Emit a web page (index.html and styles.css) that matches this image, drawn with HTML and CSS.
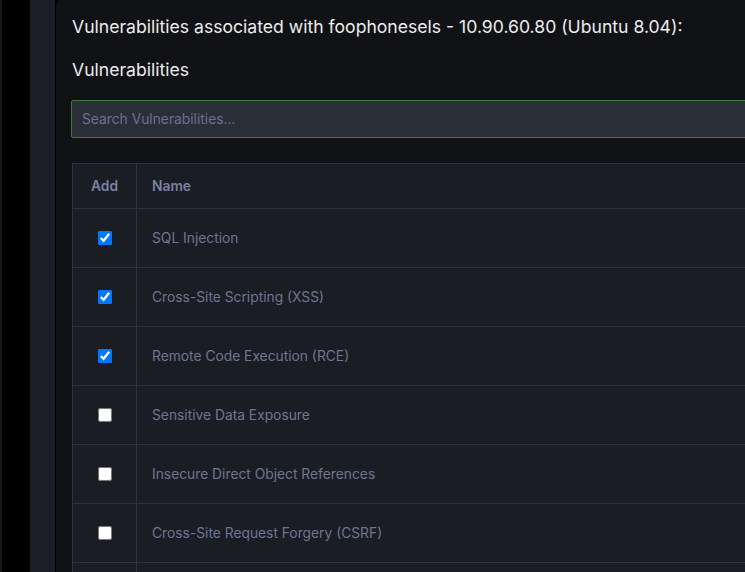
FILE: index.html
```html
<!DOCTYPE html>
<html>
<head>
<meta charset="utf-8">
<link rel="stylesheet" href="styles.css">
</head>
<body>
<div class="app">
  <div class="edge"></div>
  <div class="rail"></div>
  <div class="side"></div>
  <main class="panel">
    <h1 class="title">Vulnerabilities associated with foophonesels - 10.90.60.80 (Ubuntu 8.04):</h1>
    <h2 class="subtitle">Vulnerabilities</h2>
    <input class="search" type="text" placeholder="Search Vulnerabilities..." autofocus>
    <table class="vtable">
      <thead>
        <tr><th class="c-add">Add</th><th class="c-name">Name</th></tr>
      </thead>
      <tbody>
        <tr><td class="c-add"><input type="checkbox" checked></td><td class="c-name">SQL Injection</td></tr>
        <tr><td class="c-add"><input type="checkbox" checked></td><td class="c-name">Cross-Site Scripting (XSS)</td></tr>
        <tr><td class="c-add"><input type="checkbox" checked></td><td class="c-name">Remote Code Execution (RCE)</td></tr>
        <tr><td class="c-add"><input type="checkbox"></td><td class="c-name">Sensitive Data Exposure</td></tr>
        <tr><td class="c-add"><input type="checkbox"></td><td class="c-name">Insecure Direct Object References</td></tr>
        <tr><td class="c-add"><input type="checkbox"></td><td class="c-name">Cross-Site Request Forgery (CSRF)</td></tr>
        <tr><td class="c-add"></td><td class="c-name"></td></tr>
      </tbody>
    </table>
  </main>
</div>
</body>
</html>
```
FILE: styles.css
```css
html, body {
  margin: 0;
  padding: 0;
  background: #000;
  overflow: hidden;
  height: 100%;
}
.app {
  display: flex;
  height: 572px;
  overflow: clip;
  font-family: "Inter", "Noto Sans", sans-serif;
}
.edge { width: 2px; background: #16181d; flex: none; }
.rail { width: 28px; background: #000; flex: none; }
.side { width: 25px; background: #1b1e26; flex: none; }
.panel {
  flex: 1;
  background: #111216;
  border-radius: 9px 0 0 0;
  margin-top: -2px;
  margin-left: 1px;
  padding: 17px 0 0 16px;
  min-width: 0;
  overflow: clip;
}
.title {
  margin: 0;
  font-size: 17.6px;
  font-weight: 400;
  color: #ececec;
  line-height: 24px;
  white-space: nowrap;
}
.subtitle {
  margin: 19px 0 0 0;
  font-size: 17.6px;
  font-weight: 400;
  color: #ececec;
  line-height: 24px;
}
.search {
  display: block;
  box-sizing: border-box;
  margin: 18px 0 0 -1px;
  width: 700px;
  height: 38px;
  background: #2a2f37;
  border: 1px solid #3d7a3f;
  border-radius: 2px;
  padding: 0 10px;
  font-family: inherit;
  font-size: 13.8px;
  color: #d0d3dc;
  outline: none;
  caret-color: #ffffff;
}
.search::placeholder { color: #6a7090; }
.vtable {
  margin-top: 25px;
  border-collapse: collapse;
  width: 700px;
  background: #1b1d24;
  font-size: 13.8px;
}
.vtable th, .vtable td {
  border: 1px solid #2f323a;
  text-align: left;
  padding: 0 15px;
}
.vtable th {
  height: 44px;
  color: #7a81a1;
  font-weight: 600;
}
.vtable td {
  height: 58px;
  color: #6e7592;
}
.vtable .c-add {
  width: 33px;
  padding-left: 15px;
  padding-right: 15px;
  text-align: center;
}
.vtable input[type=checkbox] {
  margin: 0;
  width: 14px;
  height: 14px;
  vertical-align: middle;
  position: relative;
  top: -1px;
}
```
